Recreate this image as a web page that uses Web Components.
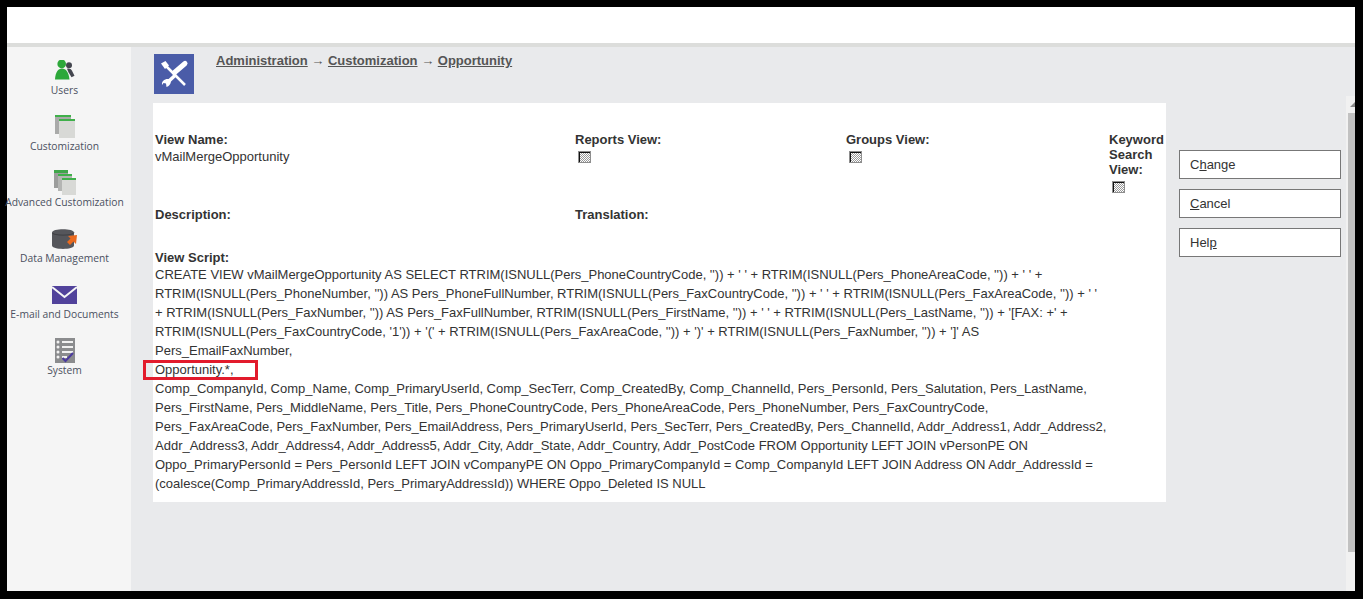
<!DOCTYPE html>
<html>
<head>
<meta charset="utf-8">
<title>View</title>
<style>
html, body { margin: 0; height: 100%; overflow: hidden; }
body { background: #000; padding: 7px 8px 8px 7px; box-sizing: border-box; display: flex; flex-direction: column; }
crm-app { flex: 1 1 auto; min-height: 0; }
</style>
</head>
<body>
<crm-app>
	<crm-nav-item slot="nav" label="Users"><svg viewBox="0 0 20 20" width="20" height="20"><circle cx="14" cy="5.300" r="3" fill="#44464f"/><path d="M12 8.700c2-.5 4 0 5 2l2.500 5-3 1.500-3-5z" fill="#44464f"/><circle cx="6.700" cy="3.900" r="4.300" fill="#2da83a"/><path d="M0 19.500C.5 12 3 8.500 7 8.500s6.500 3.500 7.500 11z" fill="#2da83a"/></svg></crm-nav-item>
	<crm-nav-item slot="nav" label="Customization"><svg style="margin-bottom:-2px" viewBox="0 0 20 23" width="20" height="23"><rect width="16" height="19" fill="#a9aaa9"/><rect width="16" height="2" fill="#3fb04a"/><rect x="4" y="4" width="16" height="19" fill="#d8d9d6"/><rect x="4" y="4" width="16" height="2" fill="#3fb04a"/></svg></crm-nav-item>
	<crm-nav-item slot="nav" label="Advanced Customization"><svg style="margin-bottom:-3px" viewBox="0 0 22 25" width="22" height="25"><rect width="14" height="18" fill="#9c9d9c"/><rect width="14" height="3" fill="#3fa64a"/><rect x="4" y="4" width="14" height="17" fill="#b4b5b3"/><rect x="4" y="4" width="14" height="2" fill="#3fb04a"/><rect x="8" y="8" width="14" height="17" fill="#d8d9d6"/><rect x="8" y="8" width="14" height="2" fill="#3fb04a"/></svg></crm-nav-item>
	<crm-nav-item slot="nav" label="Data Management"><svg style="margin-bottom:-1px" viewBox="0 0 25 20" width="25" height="20"><path d="M0 3.500C0-1 22-1 22 3.500v13c0 4.500-22 4.500-22 0z" fill="#55565b"/><path d="M0 3.500c0 3.500 22 3.500 22 0" fill="none" stroke="#37383c" stroke-width=".8"/><path d="M25 6l-1 9-2.500-2.500L18 16l-3-3 3.500-3.500L16 7z" fill="#ea6a1f"/></svg></crm-nav-item>
	<crm-nav-item slot="nav" label="E-mail and Documents"><svg viewBox="0 0 25 18" width="25" height="18"><rect width="25" height="18" fill="#51429b"/><path d="M0 1l12.500 10L25 1" fill="none" stroke="#f5f5f5" stroke-width="2"/></svg></crm-nav-item>
	<crm-nav-item slot="nav" label="System"><svg style="margin-bottom:-3px" viewBox="0 0 20 25" width="20" height="25"><rect width="20" height="25" fill="#8b8c8e"/><g fill="#f1f1f1"><circle cx="3" cy="4" r="1.500"/><circle cx="3" cy="9" r="1.500"/><circle cx="3" cy="14" r="1.500"/><circle cx="3" cy="19" r="1.500"/><rect x="7" y="3" width="11" height="2"/><rect x="7" y="8" width="11" height="2"/><rect x="7" y="13" width="11" height="2"/><rect x="7" y="18" width="5" height="2"/></g><path d="M7.500 20l3 3 7.500-8" fill="none" stroke="#4b3a9e" stroke-width="2"/></svg></crm-nav-item>

	<crm-breadcrumb slot="head">
		<svg slot="icon" viewBox="0 0 40 40" width="40" height="40"><rect width="40" height="40" fill="#4a5ca8"/><path d="M11 11L31 31" stroke="#fff" stroke-width="2.500" fill="none"/><path d="M7 9.500l4.500-2.500 3.500 4.500-4 3.500z" fill="#fff"/><path d="M20.500 18.500L31 9.500" stroke="#fff" stroke-width="5" stroke-linecap="round" fill="none"/><path d="M22 20.500L15 27" stroke="#fff" stroke-width="3.500" fill="none"/><path d="M8 31c-.5-4 2.500-6.500 7-6l2 2.500c-.5 3-2 4.500-4.500 5.500l-.5-3.500-2.500-.5z" fill="#fff"/></svg>
		<a href="#">Administration</a> → <a href="#">Customization</a> → <a href="#">Opportunity</a>
	</crm-breadcrumb>

	<crm-panel slot="main">
		<crm-field style="grid-column:1" label="View Name:">vMailMergeOpportunity</crm-field>
		<crm-field style="grid-column:2" label="Reports View:"><crm-check></crm-check></crm-field>
		<crm-field style="grid-column:3" label="Groups View:"><crm-check></crm-check></crm-field>
		<crm-field style="grid-column:4" label="Keyword Search View:"><crm-check></crm-check></crm-field>
		<crm-field style="grid-column:1" label="Description:"></crm-field>
		<crm-field style="grid-column:2 / span 3" label="Translation:"></crm-field>
		<crm-script style="grid-column:1 / -1" label="View Script:">CREATE VIEW vMailMergeOpportunity AS SELECT RTRIM(ISNULL(Pers_PhoneCountryCode, '')) + ' ' + RTRIM(ISNULL(Pers_PhoneAreaCode, '')) + ' ' +<br>RTRIM(ISNULL(Pers_PhoneNumber, '')) AS Pers_PhoneFullNumber, RTRIM(ISNULL(Pers_FaxCountryCode, '')) + ' ' + RTRIM(ISNULL(Pers_FaxAreaCode, '')) + ' '<br>+ RTRIM(ISNULL(Pers_FaxNumber, '')) AS Pers_FaxFullNumber, RTRIM(ISNULL(Pers_FirstName, '')) + ' ' + RTRIM(ISNULL(Pers_LastName, '')) + '[FAX: +' +<br>RTRIM(ISNULL(Pers_FaxCountryCode, '1')) + '(' + RTRIM(ISNULL(Pers_FaxAreaCode, '')) + ')' + RTRIM(ISNULL(Pers_FaxNumber, '')) + ']' AS<br>Pers_EmailFaxNumber,<br><crm-highlight>Opportunity.*,</crm-highlight><br>Comp_CompanyId, Comp_Name, Comp_PrimaryUserId, Comp_SecTerr, Comp_CreatedBy, Comp_ChannelId, Pers_PersonId, Pers_Salutation, Pers_LastName,<br>Pers_FirstName, Pers_MiddleName, Pers_Title, Pers_PhoneCountryCode, Pers_PhoneAreaCode, Pers_PhoneNumber, Pers_FaxCountryCode,<br>Pers_FaxAreaCode, Pers_FaxNumber, Pers_EmailAddress, Pers_PrimaryUserId, Pers_SecTerr, Pers_CreatedBy, Pers_ChannelId, Addr_Address1, Addr_Address2,<br>Addr_Address3, Addr_Address4, Addr_Address5, Addr_City, Addr_State, Addr_Country, Addr_PostCode FROM Opportunity LEFT JOIN vPersonPE ON<br>Oppo_PrimaryPersonId = Pers_PersonId LEFT JOIN vCompanyPE ON Oppo_PrimaryCompanyId = Comp_CompanyId LEFT JOIN Address ON Addr_AddressId =<br>(coalesce(Comp_PrimaryAddressId, Pers_PrimaryAddressId)) WHERE Oppo_Deleted IS NULL</crm-script>
	</crm-panel>

	<crm-button slot="actions">C<u>h</u>ange</crm-button>
	<crm-button slot="actions"><u>C</u>ancel</crm-button>
	<crm-button slot="actions">Hel<u>p</u></crm-button>
</crm-app>

<script>
class CrmApp extends HTMLElement {
	constructor() {
		super();
		this.attachShadow({ mode: "open" }).innerHTML = /* html */`
		<style>
		:host { display: flex; flex-direction: column; height: 100%; font-family: "Liberation Sans", Arial, sans-serif; }
		#top { flex: 0 0 36px; background: #fff; }
		#rule { flex: 0 0 4px; background: #dcdddb; }
		#body { flex: 1 1 auto; display: flex; min-height: 0; background: #e9eaec; }
		nav { flex: 0 0 124px; background: #f5f5f5; box-sizing: border-box; }
		#content { flex: 1 1 auto; min-width: 0; padding: 7px 0 0 22px; }
		#columns { display: flex; margin-top: 9px; align-items: flex-start; }
		#actions { display: flex; flex-direction: column; gap: 10px; margin: 47px 0 0 13px; width: 162px; }
		#scroll { flex: 0 0 9px; margin-top: 49px; background: #f1f1f1; position: relative; display: flex; flex-direction: column; padding-left: 2px; box-sizing: border-box; }
		#up { height: 17px; position: relative; }
		#up::after { content: ""; position: absolute; right: 0; top: 6px; border-style: solid; border-width: 0 0 5px 5px; border-color: transparent transparent #8a8a8a transparent; }
		#thumb { height: 439px; background: #c1c1c1; }
		</style>
		<div id="top"></div>
		<div id="rule"></div>
		<div id="body">
			<nav><slot name="nav"></slot></nav>
			<div id="content">
				<slot name="head"></slot>
				<div id="columns">
					<slot name="main"></slot>
					<div id="actions"><slot name="actions"></slot></div>
				</div>
			</div>
			<div id="scroll"><div id="up"></div><div id="thumb"></div></div>
		</div>`;
	}
}

class CrmNavItem extends HTMLElement {
	constructor() {
		super();
		this.attachShadow({ mode: "open" }).innerHTML = /* html */`
		<style>
		:host { display: flex; flex-direction: column; align-items: center; height: 56px; justify-content: flex-end; box-sizing: border-box; padding-bottom: 6px; width: 115px; white-space: nowrap; }
		#icon { display: flex; align-items: flex-end; justify-content: center; height: 26px; margin-bottom: 3px; }
		#label { font: 10.300px/14px "Open Sans", sans-serif; color: #4b5060; }
		</style>
		<div id="icon"><slot></slot></div>
		<div id="label"></div>`;
		this.shadowRoot.getElementById("label").textContent = this.getAttribute("label");
	}
}

class CrmBreadcrumb extends HTMLElement {
	constructor() {
		super();
		this.attachShadow({ mode: "open" }).innerHTML = /* html */`
		<style>
		:host { display: flex; height: 40px; margin-left: 1px; }
		#text { margin-left: 22px; font: bold 13px/14px "Liberation Sans", sans-serif; color: #555; }
		::slotted(a) { color: #555; }
		</style>
		<slot name="icon"></slot>
		<div id="text"><slot></slot></div>`;
	}
}

class CrmPanel extends HTMLElement {
	constructor() {
		super();
		this.attachShadow({ mode: "open" }).innerHTML = /* html */`
		<style>
		:host { display: grid; flex: 0 0 1013px; width: 1013px; height: 399px; box-sizing: border-box; background: #fff; padding: 29px 2px 0; grid-template-columns: 420px 271px 263px 55px; grid-template-rows: 75px 43px auto; align-content: start; font: 13px/15px "Liberation Sans", sans-serif; color: #333; }
		</style>
		<slot></slot>`;
	}
}

class CrmField extends HTMLElement {
	constructor() {
		super();
		this.attachShadow({ mode: "open" }).innerHTML = /* html */`
		<style>
		:host { display: block; }
		b { display: block; color: #333; }
		#value { display: block; min-height: 15px; padding-top: 2px; }
		</style>
		<b></b><span id="value"><slot></slot></span>`;
		this.shadowRoot.querySelector("b").textContent = this.getAttribute("label");
	}
}

class CrmScript extends HTMLElement {
	constructor() {
		super();
		this.attachShadow({ mode: "open" }).innerHTML = /* html */`
		<style>
		:host { display: block; white-space: nowrap; }
		b { display: block; color: #333; }
		#value { display: block; line-height: 19px; }
		</style>
		<b></b><span id="value"><slot></slot></span>`;
		this.shadowRoot.querySelector("b").textContent = this.getAttribute("label");
	}
}

class CrmCheck extends HTMLElement {
	constructor() {
		super();
		this.attachShadow({ mode: "open" }).innerHTML = /* html */`
		<style>
		:host { display: block; width: 13px; height: 12px; margin: 2px 0 0 3px; box-sizing: border-box; border: 1px solid #8e8e8e; box-shadow: inset 1px 1px 0 #111; background: repeating-conic-gradient(#999 0 25%, #fff 0 50%) 0 0 / 2px 2px; }
		</style>`;
	}
}

class CrmHighlight extends HTMLElement {
	constructor() {
		super();
		this.attachShadow({ mode: "open" }).innerHTML = /* html */`
		<style>
		:host { display: inline-block; position: relative; }
		#box { position: absolute; left: -12px; top: 0; width: 109px; height: 14px; border: 3px solid #e21b2c; }
		</style>
		<slot></slot><div id="box"></div>`;
	}
}

class CrmButton extends HTMLElement {
	constructor() {
		super();
		this.attachShadow({ mode: "open" }).innerHTML = /* html */`
		<style>
		:host { display: block; height: 29px; box-sizing: border-box; border: 1px solid #777; background: #fff; padding-left: 10px; font: 13px/27px "Liberation Sans", sans-serif; color: #333; }
		</style>
		<slot></slot>`;
	}
}

customElements.define("crm-app", CrmApp);
customElements.define("crm-nav-item", CrmNavItem);
customElements.define("crm-breadcrumb", CrmBreadcrumb);
customElements.define("crm-panel", CrmPanel);
customElements.define("crm-field", CrmField);
customElements.define("crm-script", CrmScript);
customElements.define("crm-check", CrmCheck);
customElements.define("crm-highlight", CrmHighlight);
customElements.define("crm-button", CrmButton);
</script>
</body>
</html>
